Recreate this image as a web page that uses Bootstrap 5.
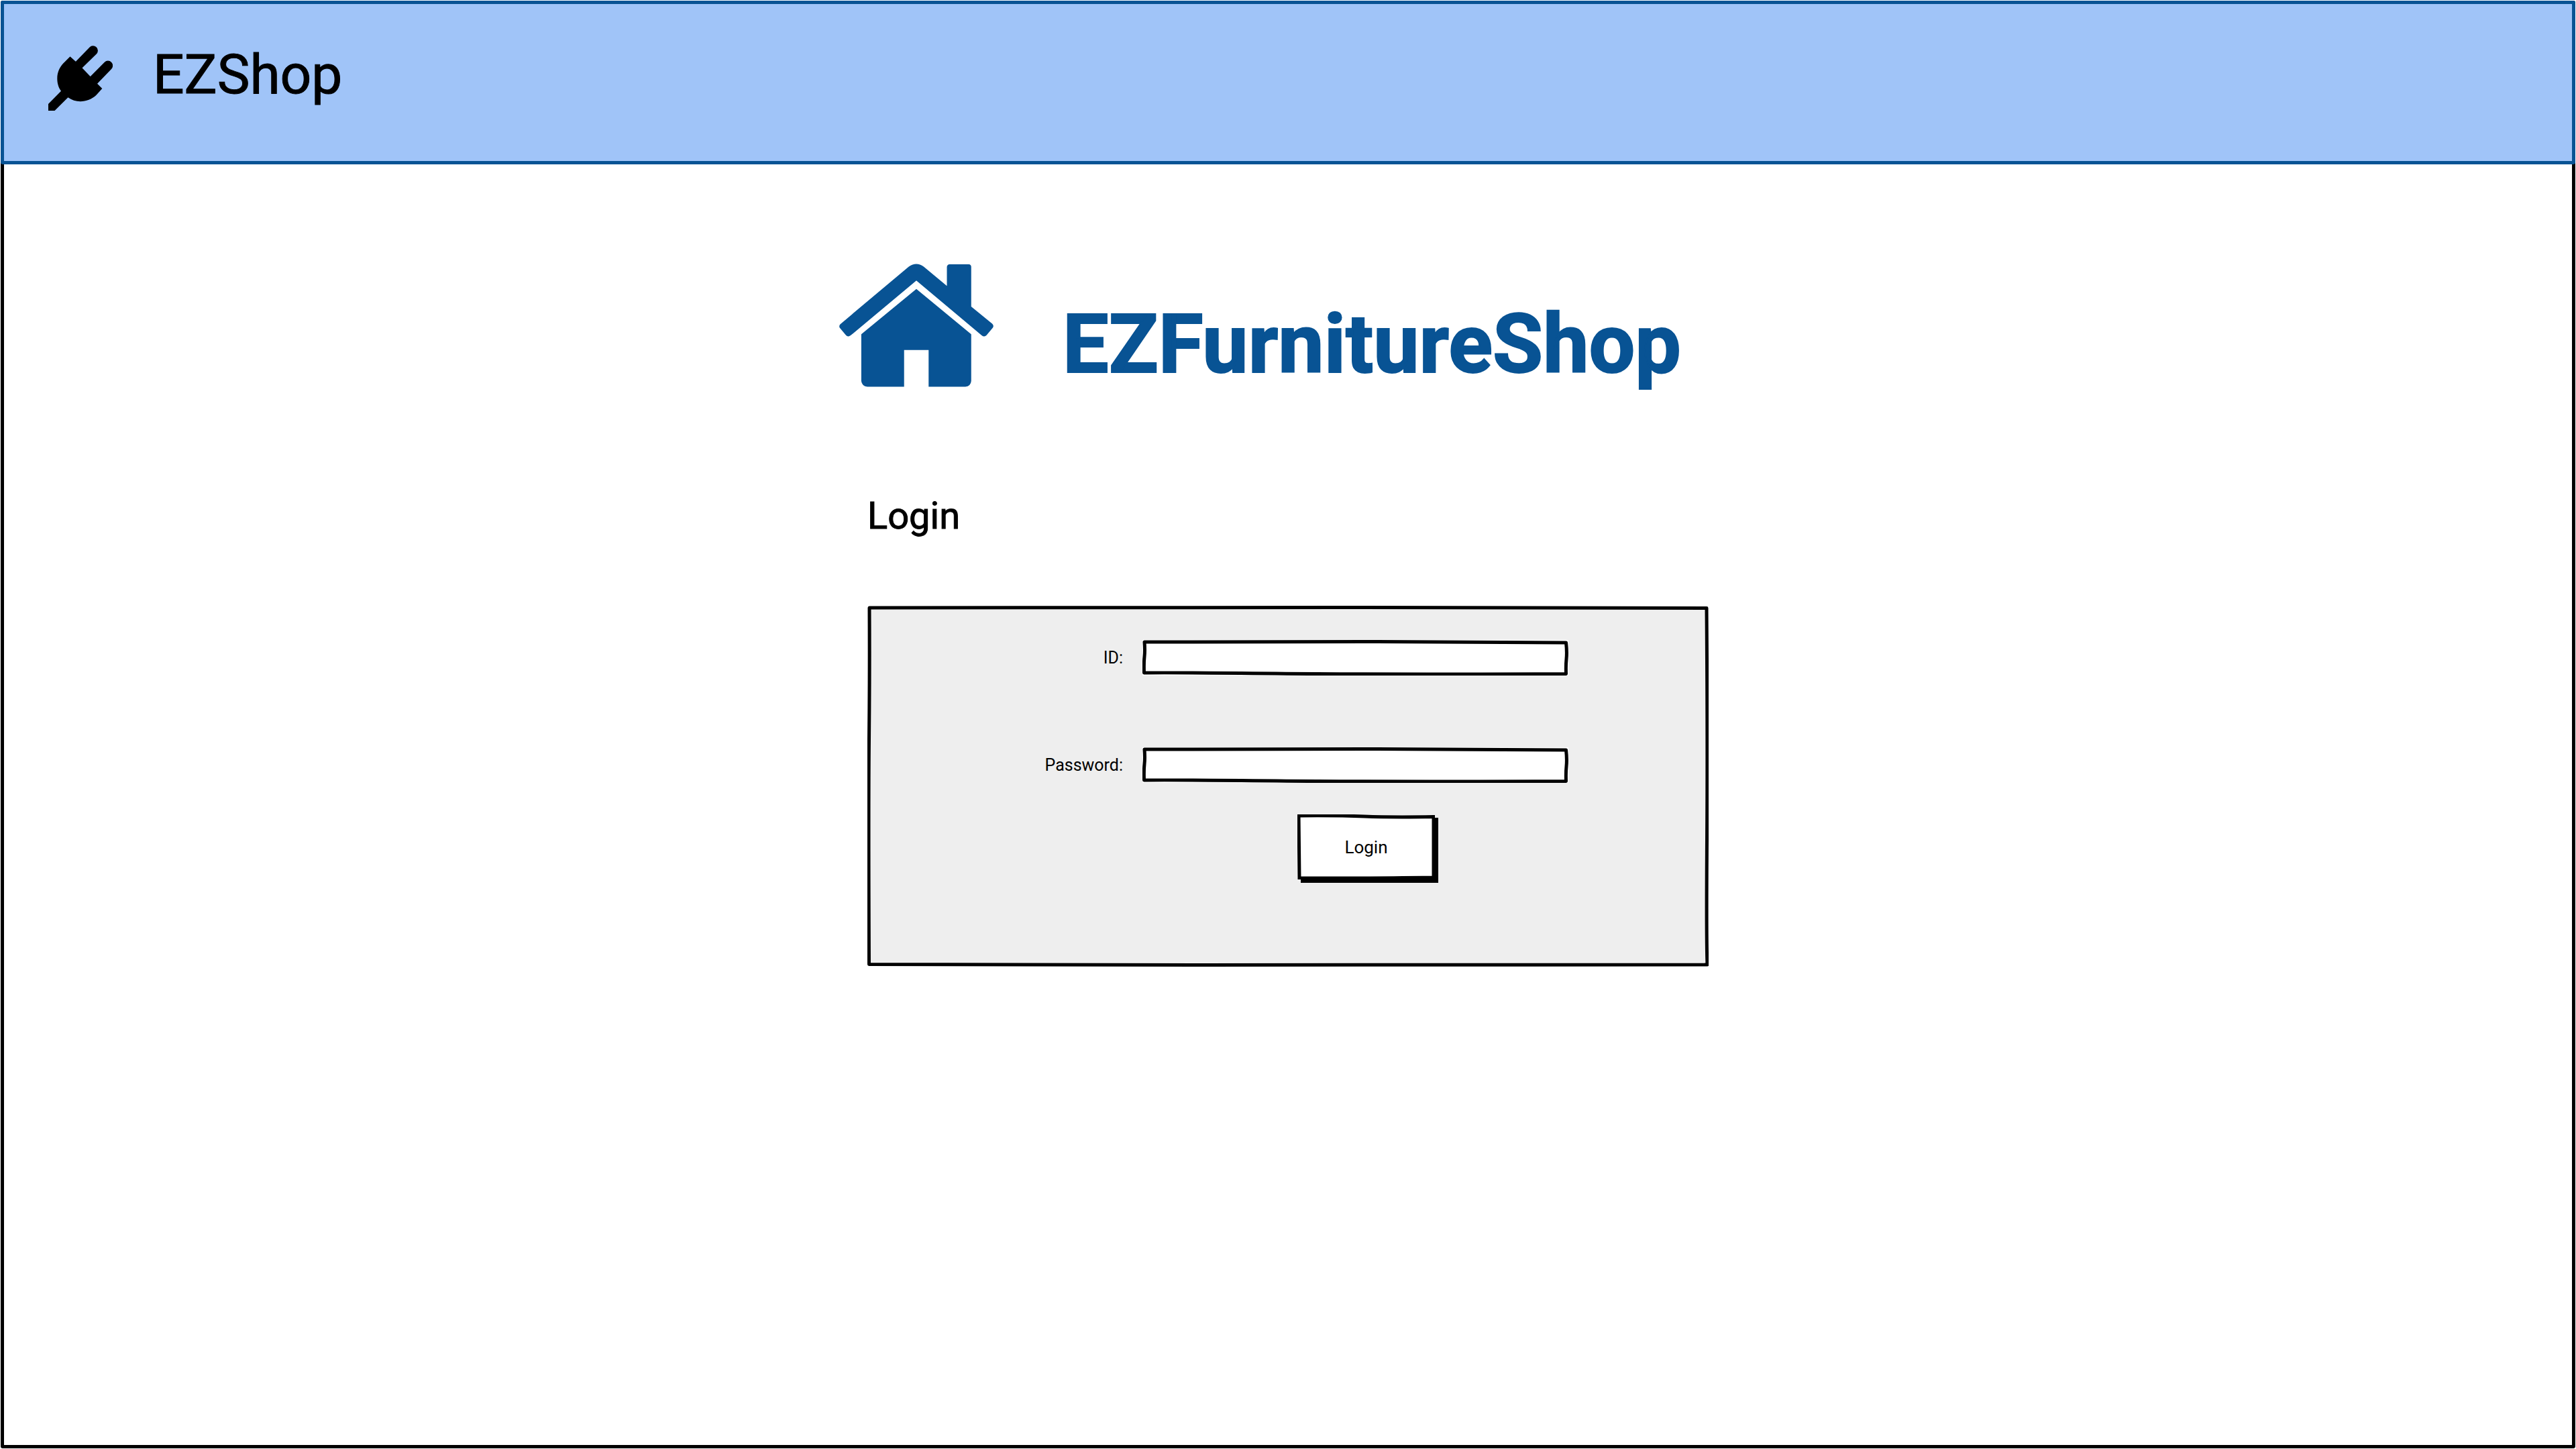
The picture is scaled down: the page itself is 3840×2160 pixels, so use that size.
<!DOCTYPE html>
<html lang="en">
<head>
<meta charset="utf-8">
<meta name="viewport" content="width=device-width, initial-scale=1">
<title>EZShop - Login</title>
<link href="https://cdn.jsdelivr.net/npm/bootstrap@5.3.0/dist/css/bootstrap.min.css" rel="stylesheet">
<style>
  :root { --ez-blue: #085394; --ez-sky: #a0c4f8; }
  body { font-family: Roboto, "Open Sans", sans-serif; color: #000; background: #fff; padding: 1px; }
  .page-frame { border: 5px solid #000; border-radius: 3px; min-height: calc(100vh - 2px); }
  .top-bar { background: var(--ez-sky); border: 5px solid var(--ez-blue); border-radius: 3px; margin: -5px -5px 0; height: 244px; padding: 58px 66px; gap: 60px; }
  .top-bar a { font-size: 82px; line-height: 94px; font-weight: 400; color: #000; -webkit-text-stroke: 1px #000; }
  .plug { width: 96px; height: 97px; }
  .hero { max-width: 1338px; margin-top: 148px; gap: 103px; }
  .hero svg { width: 230px; height: 184px; }
  .hero h1 { font-size: 122px; line-height: 126px; font-weight: 700; color: var(--ez-blue); -webkit-text-stroke: 2px var(--ez-blue); }
  .login-area { max-width: 1254px; margin-top: 160px; }
  .login-area h2 { font-size: 56px; line-height: 64px; font-weight: 400; margin-bottom: 102px; color: #000; -webkit-text-stroke: 1px #000; }
  /* hand-drawn outlines stretch with their boxes */
  .panel { padding: 51px 0 130px; background: center / 100% 100% no-repeat url("data:image/svg+xml,%3Csvg xmlns='http://www.w3.org/2000/svg' viewBox='0 0 1254 538' preserveAspectRatio='none'%3E%3Cpath d='M3 3Q400 2 700 2.500T1251 3.500Q1252.500 200 1251.500 350T1252 535Q800 536.500 500 535.500T2.500 534.500Q1.500 300 2.500 200T3 3Z' fill='%23eeeeee' stroke='%23000' stroke-width='5' stroke-linejoin='round'/%3E%3C/svg%3E"); }
  .fields { display: grid; grid-template-columns: 381px minmax(0, 635px); column-gap: 29px; row-gap: 107px; align-items: center; }
  .fields label { font-size: 25px; line-height: 32px; text-align: right; }
  .fields .form-control { height: 53px; padding: 0 16px; font-size: 25px; border: 0; border-radius: 0; background: center / 100% 100% no-repeat url("data:image/svg+xml,%3Csvg xmlns='http://www.w3.org/2000/svg' viewBox='0 0 635 53' preserveAspectRatio='none'%3E%3Cpath d='M0 0H635V53H0Z' fill='%23fff'/%3E%3Cpath d='M3 3Q210 2 350 2.500T631.500 4Q633 18 632 28T631.500 50.500Q350 51.500 200 50T2.500 49Q2 34 3 25T3 3Z' fill='%23fff' stroke='%23000' stroke-width='5' stroke-linejoin='round'/%3E%3C/svg%3E"); }
  .login-btn { width: 205px; height: 97px; margin: 47px 0 0 641px; font-size: 26px; line-height: 32px; font-weight: 400; color: #000; border: 0; border-radius: 0; box-shadow: 5px 5px 0 #000; background: center / 100% 100% no-repeat url("data:image/svg+xml,%3Csvg xmlns='http://www.w3.org/2000/svg' viewBox='0 0 205 97' preserveAspectRatio='none'%3E%3Cpath d='M2 2Q60 1.500 100 3T203 3.500L203 94Q120 95 80 95T3 95L2 2Z' fill='%23fff' stroke='%23000' stroke-width='5'/%3E%3Cpath d='M2 95.500H204V4' fill='none' stroke='%23000' stroke-width='4'/%3E%3C/svg%3E"); }
  .login-btn:hover { color: #000; }
</style>
</head>
<body>
<div class="page-frame">
  <header class="top-bar d-flex align-items-start">
    <svg class="plug flex-shrink-0 mt-1" viewBox="0 0 96 97" aria-hidden="true"><path d="M0 97V87L19 67.700C15 62 13.300 56 13.300 48.700C13.300 40 17 32 22.500 26.300L32.500 16.300L40.900 23.700L61.500 2.500A7.200 7.200 0 0 1 72.300 12L50.500 33.300L62.700 46L83.800 24.700A7.200 7.200 0 0 1 94 35L73 56.700L80.300 64L71.500 73.700C60 84.500 42 86.500 29.400 77.300L9.500 97Z"/></svg>
    <a class="text-decoration-none" href="#">EZShop</a>
  </header>
  <main>
    <div class="hero d-flex align-items-end mx-auto">
      <svg class="flex-shrink-0" viewBox="92 100 692 551" aria-hidden="true"><g fill="#085394"><path d="M438 212L684 415V625Q682 648 658 651H493V486H383V651H218Q194 648 191 625V415Z"/><path d="M404 112Q438 88 471 112L575 199V114Q576 103 587 102H673Q684 103 684 114V291L778 368Q787 376 781 386L752 421Q743 428 733 422L438 175L143 421Q132 429 123 421L94 386Q90 377 97 370Z"/></g></svg>
      <h1 class="mb-0">EZFurnitureShop</h1>
    </div>
    <section class="login-area mx-auto">
      <h2>Login</h2>
      <form class="panel">
        <div class="fields">
          <label for="user-id">ID:</label>
          <input class="form-control" type="text" id="user-id">
          <label for="user-password">Password:</label>
          <input class="form-control" type="password" id="user-password">
        </div>
        <button class="btn login-btn d-block" type="submit">Login</button>
      </form>
    </section>
  </main>
</div>
<script src="https://cdn.jsdelivr.net/npm/bootstrap@5.3.0/dist/js/bootstrap.bundle.min.js"></script>
</body>
</html>
